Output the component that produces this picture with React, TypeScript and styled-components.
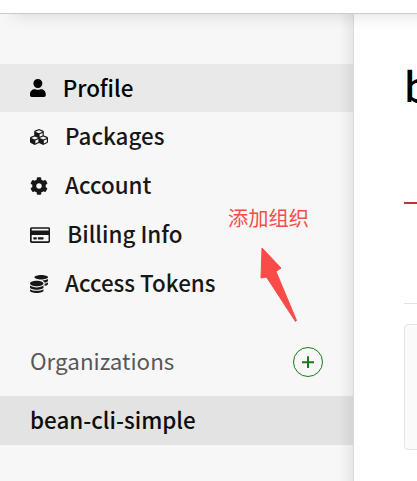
import React from "react";
import styled, { createGlobalStyle } from "styled-components";
import { FaUser, FaCubes, FaCog, FaRegCreditCard, FaCoins } from "react-icons/fa";

const GlobalStyle = createGlobalStyle`
  * { box-sizing: border-box; }
  body { margin: 0; overflow: hidden; background: #fff; }
`;

const Page = styled.div`
  position: relative;
  display: flex;
  flex-direction: column;
  width: 417px;
  height: 481px;
  overflow: hidden;
  font-family: "Noto Sans CJK SC", "Noto Sans", sans-serif;
  color: #0d0d0d;
`;

const Header = styled.header`
  position: relative;
  z-index: 1;
  flex: none;
  height: 14px;
  background: #fff;
  border-bottom: 1px solid #cbcbcb;
  box-shadow: 14px 2px 16px rgba(0, 0, 0, 0.13);
`;

const Body = styled.div`
  display: flex;
  flex: 1;
  min-height: 0;
`;

const Sidebar = styled.aside`
  position: relative;
  flex: none;
  width: 354px;
  padding-top: 50px;
  background: #f7f7f7;
  border-right: 1px solid #dadada;
`;

const EdgeShade = styled.div`
  position: absolute;
  inset: 0 0 0 auto;
  width: 14px;
  background: linear-gradient(to right, rgba(0, 0, 0, 0), rgba(0, 0, 0, 0.065));
`;

const NavItem = styled.a<{ $active?: boolean; $iconWidth: number }>`
  display: flex;
  align-items: center;
  gap: 17px;
  height: ${(p) => (p.$active ? 48 : 49)}px;
  padding-left: 30px;
  background: ${(p) => (p.$active ? "#e9e9e9" : "transparent")};
  color: ${(p) => (p.$active ? "#000" : "#171717")};

  svg {
    flex: none;
    width: ${(p) => p.$iconWidth}px;
    height: 18px;
  }
`;

const Label = styled.span`
  margin-top: -3px;
  font-size: 22.4px;
  line-height: 32px;
  font-weight: 500;
  white-space: nowrap;
`;

const SectionHeading = styled.div`
  display: flex;
  align-items: center;
  justify-content: space-between;
  height: 30px;
  margin-top: 39px;
  padding: 0 30px;
`;

const Muted = styled(Label)`
  margin-top: -5px;
  font-weight: 400;
  color: #585858;
`;

const AddButton = styled.button`
  display: grid;
  place-items: center;
  width: 30px;
  height: 30px;
  padding: 0;
  border: 1px solid #177b1b;
  border-radius: 50%;
  background: transparent;
  color: #177b1b;
`;

const OrgItem = styled.a`
  display: flex;
  align-items: center;
  height: 49px;
  margin-top: 19px;
  padding-left: 30px;
  background: #e3e3e3;
`;

const Main = styled.main`
  display: flex;
  flex-direction: column;
  flex: 1;
  min-width: 0;
  padding-left: 50px;
  overflow: hidden;
  background: #fff;
`;

const Title = styled.h1`
  flex: none;
  height: 190px;
  margin: 0;
  padding-top: 41px;
  border-bottom: 2px solid #bc3433;
  font-size: 40px;
  line-height: 60px;
  font-weight: 500;
  color: #000;
  white-space: nowrap;
`;

const Divider = styled.div`
  flex: none;
  height: 1px;
  margin-top: 99px;
  background: #e3e3e3;
`;

const Panel = styled.section`
  flex: none;
  width: 300px;
  height: 126px;
  margin-top: 20px;
  border: 1px solid #e3e3e3;
  border-radius: 4px;
  background: #fafafa;
`;

const Annotation = styled.div`
  position: absolute;
  z-index: 2;
  left: 228px;
  top: 203px;
  font-size: 20.25px;
  line-height: 30px;
  font-weight: 400;
  color: #fa4b48;
`;

const Arrow = styled.svg`
  position: absolute;
  z-index: 2;
  left: 256px;
  top: 243px;
`;

const items = [
  { label: "Profile", Icon: FaUser, iconWidth: 15.75, active: true },
  { label: "Packages", Icon: FaCubes, iconWidth: 18 },
  { label: "Account", Icon: FaCog, iconWidth: 18 },
  { label: "Billing Info", Icon: FaRegCreditCard, iconWidth: 20.25 },
  { label: "Access Tokens", Icon: FaCoins, iconWidth: 18 },
];

export default function App() {
  return (
    <>
      <GlobalStyle />
      <Page>
        <Header />
        <Body>
          <Sidebar>
            <nav>
              {items.map(({ label, Icon, iconWidth, active }) => (
                <NavItem key={label} $active={active} $iconWidth={iconWidth}>
                  <Icon />
                  <Label>{label}</Label>
                </NavItem>
              ))}
            </nav>
            <SectionHeading>
              <Muted>Organizations</Muted>
              <AddButton aria-label="Add organization">
                <svg width="12" height="12" viewBox="0 0 12 12" stroke="currentColor" strokeWidth="2">
                  <path d="M0 6.3H12M6 0.3V12" />
                </svg>
              </AddButton>
            </SectionHeading>
            <OrgItem>
              <Label>bean-cli-simple</Label>
            </OrgItem>
            <EdgeShade />
          </Sidebar>
          <Main>
            <Title>b</Title>
            <Divider />
            <Panel />
          </Main>
        </Body>
        <Annotation>添加组织</Annotation>
        <Arrow width="46" height="84" viewBox="0 0 46 84" fill="#fa4b48" stroke="#fa4b48" strokeLinejoin="round">
          <path d="M6 5L25 25L20 28.5L40.5 77.5L39.5 78.5L10.5 34L5 35Z" />
        </Arrow>
      </Page>
    </>
  );
}
